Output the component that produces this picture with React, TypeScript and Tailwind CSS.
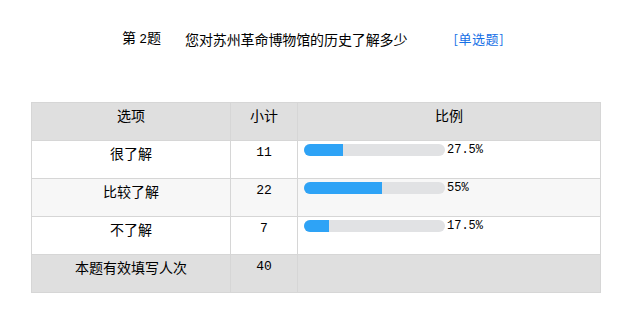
import React from "react";

const rows = [
  { label: "很了解", count: "11", pct: 27.5, text: "27.5%", bg: "bg-white" },
  { label: "比较了解", count: "22", pct: 55, text: "55%", bg: "bg-[#f7f7f7]" },
  { label: "不了解", count: "7", pct: 17.5, text: "17.5%", bg: "bg-white" },
];

const cjk = { fontFamily: '"Noto Sans CJK SC", "Liberation Sans", sans-serif' };
const mono = { fontFamily: '"Liberation Mono", "Noto Sans CJK SC", monospace' };

export default function App() {
  return (
    <div className="w-[625px] h-[332px] bg-white text-black" style={cjk}>
      <div className="flex items-center pt-[27px] pl-[122px] text-[14px] leading-[20px]">
        <span className="w-[63px]">第 <span style={mono} className="text-[13px]">2</span>题</span>
        <span className="tracking-[-0.1px]">您对苏州革命博物馆的历史了解多少</span>
        <span className="ml-[46px] text-[#1670e6] text-[13px] tracking-[0.6px]">[单选题]</span>
      </div>
      <div className="px-[31px] mt-[52px]">
        <table className="w-[569px] table-fixed border-collapse text-[14px] leading-[20px]">
          <colgroup>
            <col className="w-[199px]" />
            <col className="w-[67px]" />
            <col className="w-[303px]" />
          </colgroup>
          <tbody>
            <tr className="h-[38px] bg-[#dfdfdf]">
              <td className="border border-[#d6d6d6] align-top text-center pt-[2px]">选项</td>
              <td className="border border-[#d6d6d6] align-top text-center pt-[2px]">小计</td>
              <td className="border border-[#d6d6d6] align-top text-center pt-[2px]">比例</td>
            </tr>
            {rows.map((r) => (
              <tr key={r.label} className={`h-[38px] ${r.bg}`}>
                <td className="border border-[#d6d6d6] align-top text-center pt-[2px]">{r.label}</td>
                <td className="border border-[#d6d6d6] align-top text-center pt-[2px] text-[13px]" style={mono}>{r.count}</td>
                <td className="border border-[#d6d6d6] align-top pl-[6px] pt-[2px]">
                  <div className="flex items-start">
                    <div className="mt-[1px] w-[141px] h-[12px] rounded-full bg-[#e1e2e4] overflow-hidden">
                      <div className="h-full bg-[#2ea3f6]" style={{ width: `${r.pct}%` }} />
                    </div>
                    <span className="ml-[2px] text-[12px] leading-[14px]" style={mono}>{r.text}</span>
                  </div>
                </td>
              </tr>
            ))}
            <tr className="h-[38px] bg-[#dfdfdf]">
              <td className="border border-[#d6d6d6] align-top text-center pt-[2px]">本题有效填写人次</td>
              <td className="border border-[#d6d6d6] align-top text-center pt-[2px] text-[13px]" style={mono}>40</td>
              <td className="border border-[#d6d6d6]"></td>
            </tr>
          </tbody>
        </table>
      </div>
    </div>
  );
}
